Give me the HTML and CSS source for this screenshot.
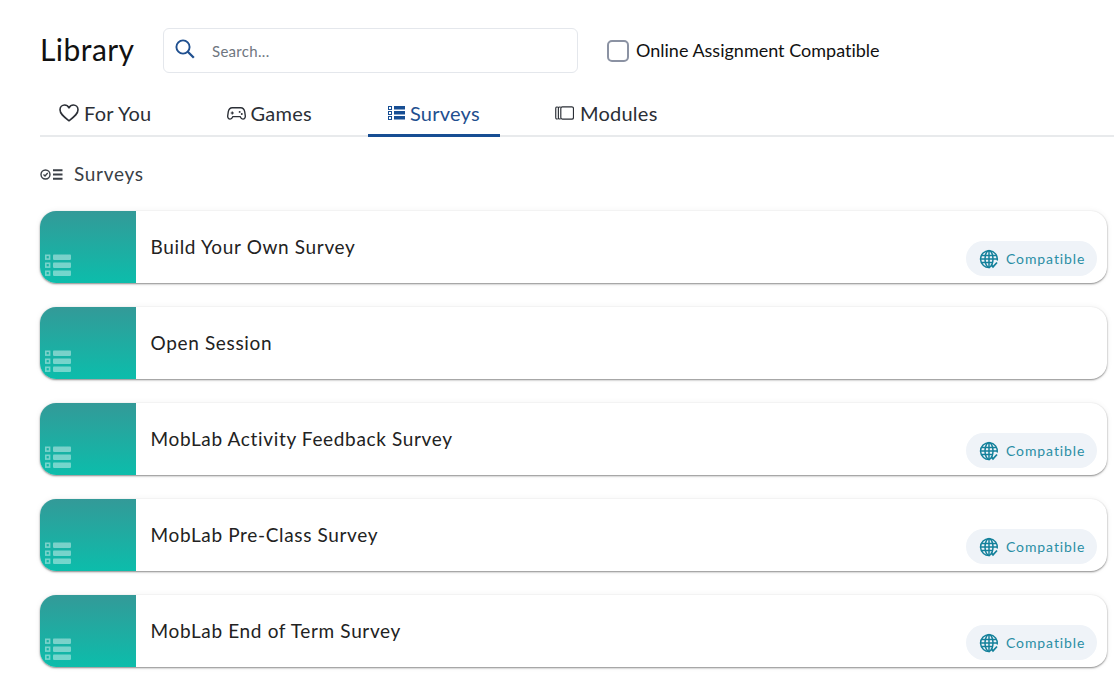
FILE: index.html
```html
<!DOCTYPE html>
<html lang="en">
<head>
<meta charset="utf-8">
<title>Library</title>
<link rel="stylesheet" href="styles.css">
</head>
<body>
<svg class="defs" width="0" height="0" aria-hidden="true">
  <symbol id="thumb" viewBox="0 0 26 22">
    <g fill="none" stroke="#fff" stroke-width="1.6"><rect x=".8" y="1.3" width="3.8" height="3.8"/><rect x=".8" y="9.300" width="3.800" height="3.800"/><rect x=".8" y="17.300" width="3.800" height="3.800"/></g>
    <g fill="#fff"><rect x="8" y=".5" width="18" height="5.400" rx=".8"/><rect x="8" y="8.500" width="18" height="5.400" rx=".8"/><rect x="8" y="16.500" width="18" height="5.400" rx=".8"/></g>
  </symbol>
  <symbol id="globe" viewBox="0 0 20 20">
    <g fill="none" stroke="currentColor" stroke-width="1.5"><path d="M18.200 11.500A8.400 8.400 0 1 0 11 18.400"/><ellipse cx="10" cy="10" rx="4" ry="8.400"/><path d="M10 1.600v16.800M2.400 6.400h15.200M1.600 10h16.800M2.400 13.600h11"/><path d="M12 15.500l2 2.400 4-4.400" stroke-width="1.700"/></g>
  </symbol>
</svg>
<header class="top">
  <h1 class="title">Library</h1>
  <div class="search">
    <svg class="search-icon" viewBox="0 0 20 20"><circle cx="8" cy="8" r="6.600" fill="none" stroke="currentColor" stroke-width="1.900"/><path d="M12.800 12.800l6 6" stroke="currentColor" stroke-width="2.300" fill="none"/></svg>
    <span class="placeholder">Search...</span>
  </div>
  <label class="check"><span class="box"></span><span>Online Assignment Compatible</span></label>
</header>
<nav class="tabs">
  <a class="tab">
    <svg class="tab-icon heart" viewBox="0 0 20 18"><path d="M10 16.800C5 12.800 1 10 1 5.800 1 3 3.200 1 5.600 1 7.400 1 9 2 10 3.800 11 2 12.600 1 14.400 1 16.800 1 19 3 19 5.800 19 10 15 12.800 10 16.800z" fill="none" stroke="currentColor" stroke-width="1.600" stroke-linejoin="round"/></svg>
    For You
  </a>
  <a class="tab">
    <svg class="tab-icon game" viewBox="0 0 18 14"><path d="M5 1.500h8c2.200 0 3.400 1.500 3.800 4l.5 3.500c.3 2-.8 3.300-2.200 3.300-1.200 0-1.900-.8-2.600-2.300H5.500c-.7 1.500-1.400 2.300-2.600 2.300C1.500 12.300.4 11 .7 9l.5-3.500c.4-2.500 1.600-4 3.800-4z" fill="none" stroke="currentColor" stroke-width="1.300"/><path d="M3.500 6.500h3M5 5v3" stroke="currentColor" stroke-width="1.100" fill="none"/><circle cx="12" cy="5.500" r=".9" fill="currentColor"/><circle cx="14" cy="7.500" r=".9" fill="currentColor"/></svg>
    Games
  </a>
  <a class="tab active">
    <svg class="tab-icon list" viewBox="0 0 17 14"><g fill="none" stroke="currentColor"><rect x=".5" y=".5" width="3" height="3"/><rect x=".5" y="5.500" width="3" height="3"/><rect x=".5" y="10.500" width="3" height="3"/></g><g fill="currentColor"><rect x="6" y="0" width="11" height="3.500"/><rect x="6" y="5" width="11" height="3.500"/><rect x="6" y="10" width="11" height="3.500"/></g></svg>
    Surveys
  </a>
  <a class="tab">
    <svg class="tab-icon mod" viewBox="0 0 18 13"><g fill="none" stroke="currentColor" stroke-width="1.100"><rect x="5.500" y=".7" width="12" height="11.600" rx="1.500"/><path d="M5.500 1C3.500.6 3.200 1 3.200 2.500v8c0 1.500.3 1.900 2.300 1.500M3 1C1 .6.700 1 .7 2.500v8c0 1.500.3 1.900 2.300 1.500"/></g></svg>
    Modules
  </a>
</nav>
<section class="list-head">
  <svg class="head-icon" viewBox="0 0 23 11"><circle cx="5.500" cy="5.500" r="4.500" fill="none" stroke="currentColor" stroke-width="1.400"/><path d="M3.500 5.500l1.500 1.500 2.700-3" fill="none" stroke="currentColor" stroke-width="1.300"/><path d="M13 1.200h9.500M13 5.500h9.500M13 9.800h9.500" stroke="currentColor" stroke-width="2"/></svg>
  <h2 class="head-text">Surveys</h2>
</section>
<main class="cards">
  <article class="card">
    <div class="thumb"><svg class="thumb-icon"><use href="#thumb"/></svg></div>
    <h3 class="card-title">Build Your Own Survey</h3>
    <span class="badge"><svg class="globe"><use href="#globe"/></svg>Compatible</span>
  </article>
  <article class="card">
    <div class="thumb"><svg class="thumb-icon"><use href="#thumb"/></svg></div>
    <h3 class="card-title">Open Session</h3>
  </article>
  <article class="card">
    <div class="thumb"><svg class="thumb-icon"><use href="#thumb"/></svg></div>
    <h3 class="card-title">MobLab Activity Feedback Survey</h3>
    <span class="badge"><svg class="globe"><use href="#globe"/></svg>Compatible</span>
  </article>
  <article class="card">
    <div class="thumb"><svg class="thumb-icon"><use href="#thumb"/></svg></div>
    <h3 class="card-title">MobLab Pre-Class Survey</h3>
    <span class="badge"><svg class="globe"><use href="#globe"/></svg>Compatible</span>
  </article>
  <article class="card">
    <div class="thumb"><svg class="thumb-icon"><use href="#thumb"/></svg></div>
    <h3 class="card-title">MobLab End of Term Survey</h3>
    <span class="badge"><svg class="globe"><use href="#globe"/></svg>Compatible</span>
  </article>
</main>
</body>
</html>
```
FILE: styles.css
```css
* { box-sizing: border-box; }
html, body { height: 100%; }
body {
  margin: 0;
  padding-left: 40px;
  overflow: hidden;
  background: #fff;
  color: #222;
  font-family: Lato, "Liberation Sans", sans-serif;
  font-variant-ligatures: none;
}
.defs { position: absolute; }
.top {
  display: flex;
  align-items: center;
  height: 45px;
  margin-top: 28px;
}
.title {
  flex: none;
  width: 94px;
  margin: -3px 29px 0 0;
  font-size: 30px;
  font-weight: 400;
  letter-spacing: .45px;
  color: #111;
}
.search {
  display: flex;
  align-items: center;
  width: 415px;
  height: 45px;
  padding-left: 11px;
  border: 1px solid #e4e7ec;
  border-radius: 6px;
}
.search-icon { width: 20px; height: 20px; margin: -4px 17px 0 0; color: #1f4f8f; }
.placeholder { font-size: 15px; letter-spacing: .3px; color: #6f7680; }
.check {
  display: flex;
  align-items: center;
  margin-left: 29px;
  font-size: 18px;
  color: #111;
}
.check span:last-child { margin-top: -2px; }
.box {
  width: 22px;
  height: 22px;
  margin-right: 7px;
  border: 2px solid #8b92a3;
  border-radius: 5px;
}
.tabs {
  display: flex;
  gap: 36px;
  height: 45px;
  margin-top: 19px;
  border-bottom: 2px solid #e8eaec;
}
.tab {
  display: flex;
  align-items: center;
  gap: 5px;
  height: 45px;
  padding: 0 20px 0 19px;
  border-bottom: 3px solid transparent;
  font-size: 20px;
  letter-spacing: .25px;
  color: #2b2f36;
}
.tab.active { color: #1f4f8f; border-bottom-color: #174e93; padding-left: 20px; }
.tab-icon { flex: none; }
.heart { width: 20px; height: 18px; }
.game { width: 19px; height: 15px; }
.list { width: 17px; height: 14px; color: #174e93; }
.mod { width: 19px; height: 14px; margin-right: 1px; }
.list-head {
  display: flex;
  align-items: center;
  height: 24px;
  margin-top: 25px;
}
.head-icon { width: 23px; height: 11px; color: #3a3f46; margin-right: 11px; }
.head-text {
  margin: -2px 0 0;
  font-size: 19px;
  font-weight: 400;
  letter-spacing: .7px;
  color: #3a3f46;
}
.cards {
  display: flex;
  flex-direction: column;
  gap: 24px;
  width: 1067px;
  margin-top: 25px;
}
.card {
  display: flex;
  align-items: center;
  height: 72px;
  border-radius: 16px;
  background: #fff;
  box-shadow: 0 1px 2px rgba(0,0,0,.45), 0 0 6px rgba(0,0,0,.06);
  overflow: hidden;
}
.thumb {
  display: flex;
  align-items: flex-end;
  flex: none;
  width: 96px;
  height: 100%;
  padding: 0 0 7px 5px;
  background: linear-gradient(#339a98, #0cbdab);
}
.thumb-icon { width: 26px; height: 22px; opacity: .42; }
.card-title {
  flex: 1;
  margin: -1px 0 0 14.5px;
  font-size: 19px;
  font-weight: 400;
  letter-spacing: .65px;
  color: #222;
}
.badge {
  display: flex;
  align-items: center;
  align-self: flex-end;
  gap: 7px;
  height: 35px;
  width: 131px;
  margin: 0 10px 7px 0;
  padding-left: 13px;
  border-radius: 18px;
  background: #eff3f8;
  font-size: 14px;
  letter-spacing: .9px;
  color: #2a8ea5;
}
.globe { width: 20px; height: 20px; color: #14819b; }
```
